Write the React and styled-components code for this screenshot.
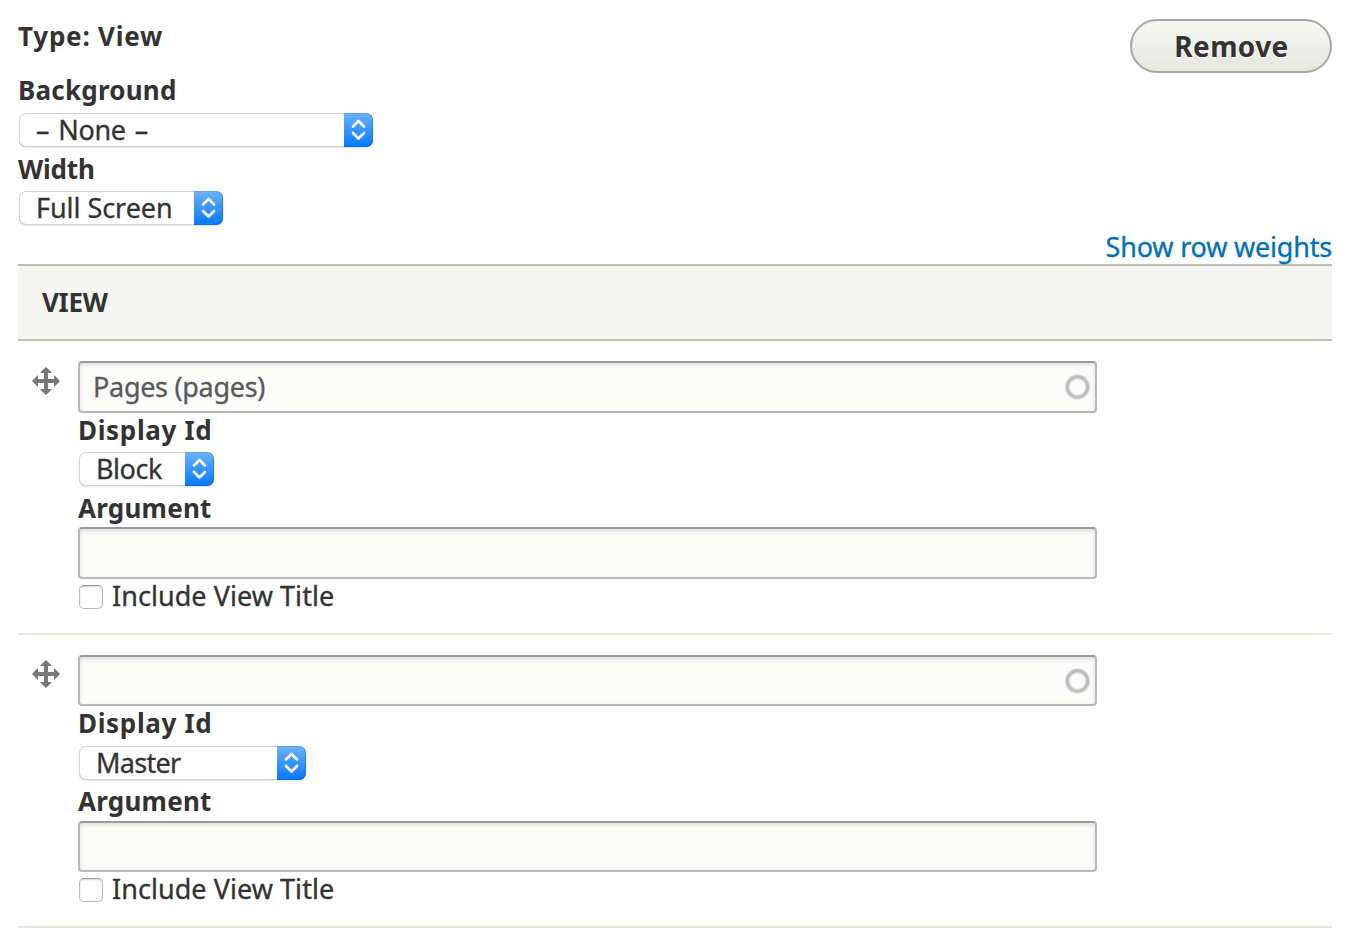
import React from 'react';
import styled, { createGlobalStyle, css } from 'styled-components';

const GlobalStyle = createGlobalStyle`
  * { box-sizing: border-box; }
  body {
    margin: 0;
    background: #fff;
    color: #333;
    font-family: "Noto Sans", "Open Sans", sans-serif;
    font-size: 27px;
  }
`;

const Page = styled.main`
  padding: 18px 14px 0 18px;
  height: 942px;
  overflow: hidden;
`;

const Header = styled.header`
  display: flex;
  justify-content: space-between;
  align-items: flex-start;
`;

const Settings = styled.div`
  display: flex;
  flex-direction: column;
  align-items: flex-start;
`;

const labelText = css`
  font-size: 26px;
  font-weight: 700;
  letter-spacing: ${(p) => p.$spacing || 0}px;
  white-space: nowrap;
`;

const regularText = css`
  -webkit-text-stroke: 0.3px currentColor;
  white-space: nowrap;
`;

const Title = styled.div`
  ${labelText}
  line-height: 36px;
  margin-bottom: 18px;
`;

const SettingLabel = styled.label`
  ${labelText}
  line-height: 36px;
  margin-bottom: ${(p) => p.$gap}px;
`;

const RemoveButton = styled.button`
  width: 202px;
  height: 54px;
  margin: 1px 0 0;
  padding: 0 0 0 1px;
  border: 2px solid #a6a6a6;
  border-radius: 27px;
  background: linear-gradient(#f6f6f3, #e7e7df);
  color: #333;
  font: 700 28px "Noto Sans", sans-serif;
  letter-spacing: 0.4px;
  text-shadow: 0 1px 1px rgba(255, 255, 255, 0.9);
`;

const SelectBox = styled.div`
  display: flex;
  justify-content: space-between;
  width: ${(p) => p.$width}px;
  height: 34px;
  margin: 0 0 ${(p) => p.$gap || 0}px 1px;
  border-radius: 7px;
  background: #fff;
  box-shadow: inset 0 0 0 1px #d2d2d2, inset 0 -1px 0 #b9b9b9, 0 1px 1px rgba(0, 0, 0, 0.1);
`;

const SelectValue = styled.span`
  ${regularText}
  padding-left: 17px;
  line-height: 34px;
  letter-spacing: ${(p) => p.$spacing || 0}px;
  word-spacing: ${(p) => p.$wordSpacing || 0}px;
`;

const SelectArrows = styled.span`
  display: flex;
  align-items: center;
  justify-content: center;
  width: 29px;
  height: 34px;
  border-radius: 0 7px 7px 0;
  background: linear-gradient(#6cb3fa, #3d98fc 45%, #067aff);
  box-shadow: inset 0 1px 0 rgba(50, 130, 230, 0.35), inset -1px -1px 0 rgba(0, 80, 220, 0.4);
`;

const WeightsBar = styled.div`
  display: flex;
  justify-content: flex-end;
  height: 39px;
  padding-top: 4px;
`;

const WeightsLink = styled.a`
  ${regularText}
  color: #0071b8;
  line-height: 36px;
  letter-spacing: -0.2px;
`;

const TableHead = styled.div`
  height: 77px;
  padding-left: 24px;
  border-top: 2px solid #bfbfba;
  border-bottom: 2px solid #bfbfba;
  background: #f5f5f2;
  ${labelText}
  line-height: 73px;
`;

const Row = styled.section`
  display: grid;
  grid-template-columns: 60px 1019px;
  align-items: start;
  height: ${(p) => p.$height}px;
  padding-top: 20px;
  border-bottom: 2px solid #e6e6df;
`;

const DragHandle = styled.span`
  display: flex;
  padding: ${(p) => p.$top}px 0 0 14px;
`;

const Fields = styled.div`
  display: flex;
  flex-direction: column;
  align-items: flex-start;
`;

const InputBox = styled.div`
  display: flex;
  align-items: center;
  justify-content: space-between;
  width: 100%;
  height: ${(p) => p.$height}px;
  padding: 0 4px 0 13px;
  border: 2px solid #b8b8b8;
  border-top-color: #999;
  border-radius: 4px;
  background: #fcfcfa;
  box-shadow: inset 0 2px 4px rgba(0, 0, 0, 0.125);
`;

const InputText = styled.span`
  ${regularText}
  padding-bottom: 1px;
  color: #595959;
  letter-spacing: -0.3px;
`;

const FieldLabel = styled.label`
  ${labelText}
  line-height: 32px;
  margin: ${(p) => p.$top || 0}px 0 ${(p) => p.$gap}px;
`;

const CheckLine = styled.label`
  ${regularText}
  display: flex;
  align-items: flex-start;
  gap: 9px;
  padding: ${(p) => p.$top}px 0 0 1px;
  line-height: 32px;
  letter-spacing: 0.05px;
`;

const CheckSquare = styled.span`
  width: 24px;
  height: 24px;
  margin-top: 5px;
  border: 1px solid #b9b9b9;
  border-top-color: #999;
  border-radius: 5px;
  background: #fff;
  box-shadow: inset 0 1px 2px rgba(0, 0, 0, 0.16);
`;

const MoveIcon = () => (
  <svg width="28" height="28" viewBox="0 0 28 28" fill="#787878">
    <path d="M14 0L19.5 5.3V6H16V12H22V8.5H22.7L28 14L22.7 19.5H22V16H16V22H19.5V22.7L14 28L8.5 22.7V22H12V16H6V19.5H5.3L0 14L5.3 8.5H6V12H12V6H8.5V5.3Z" />
  </svg>
);

const Throbber = () => (
  <svg width="27" height="26" viewBox="0 0 27 26" fill="none" stroke="#b4b4b4">
    <circle cx="13.5" cy="13" r="10.2" strokeOpacity=".35" strokeWidth="5.2" />
    <circle cx="13.5" cy="13" r="10.2" strokeOpacity=".8" strokeWidth="3" />
  </svg>
);

function Select({ value, width, spacing, wordSpacing, gap }) {
  return (
    <SelectBox $width={width} $gap={gap}>
      <SelectValue $spacing={spacing} $wordSpacing={wordSpacing}>{value}</SelectValue>
      <SelectArrows>
        <svg width="15" height="22" viewBox="0 0 15 22" fill="none" stroke="#fff" strokeWidth="2.6" strokeLinecap="round" strokeLinejoin="round">
          <path d="M2 7.5L7.5 2L13 7.5M2 14L7.5 19.5L13 14" />
        </svg>
      </SelectArrows>
    </SelectBox>
  );
}

const rows = [
  {
    id: 1, view: 'Pages (pages)', display: 'Block', width: 135, spacing: -0.45,
    height: 294, handleTop: 6, inputHeight: 52, displayGap: 6, selectGap: 6, argumentGap: 3, checkTop: 1,
  },
  {
    id: 2, view: '', display: 'Master', width: 227, spacing: -0.71,
    height: 293, handleTop: 5, inputHeight: 51, displayGap: 7, selectGap: 5, argumentGap: 4, checkTop: 1,
  },
];

export default function App() {
  return (
    <Page>
      <GlobalStyle />
      <Header>
        <Settings>
          <Title $spacing={0.78}>Type: View</Title>
          <SettingLabel $spacing={0.22} $gap={5}>Background</SettingLabel>
          <Select value="– None –" width={354} spacing={-0.35} wordSpacing={2.5} gap={4} />
          <SettingLabel $spacing={-0.16} $gap={4}>Width</SettingLabel>
          <Select value="Full Screen" width={204} spacing={-0.05} />
        </Settings>
        <RemoveButton type="button">Remove</RemoveButton>
      </Header>
      <WeightsBar>
        <WeightsLink>Show row weights</WeightsLink>
      </WeightsBar>
      <TableHead $spacing={-0.3}>VIEW</TableHead>
      {rows.map((r) => (
        <Row key={r.id} $height={r.height}>
          <DragHandle $top={r.handleTop}><MoveIcon /></DragHandle>
          <Fields>
            <InputBox $height={r.inputHeight}>
              <InputText>{r.view}</InputText>
              <Throbber />
            </InputBox>
            <FieldLabel $spacing={0.65} $top={1} $gap={r.displayGap}>Display Id</FieldLabel>
            <Select value={r.display} width={r.width} spacing={r.spacing} gap={r.selectGap} />
            <FieldLabel $spacing={0.22} $gap={r.argumentGap}>Argument</FieldLabel>
            <InputBox $height={r.inputHeight} />
            <CheckLine $top={r.checkTop}>
              <CheckSquare />
              Include View Title
            </CheckLine>
          </Fields>
        </Row>
      ))}
    </Page>
  );
}
